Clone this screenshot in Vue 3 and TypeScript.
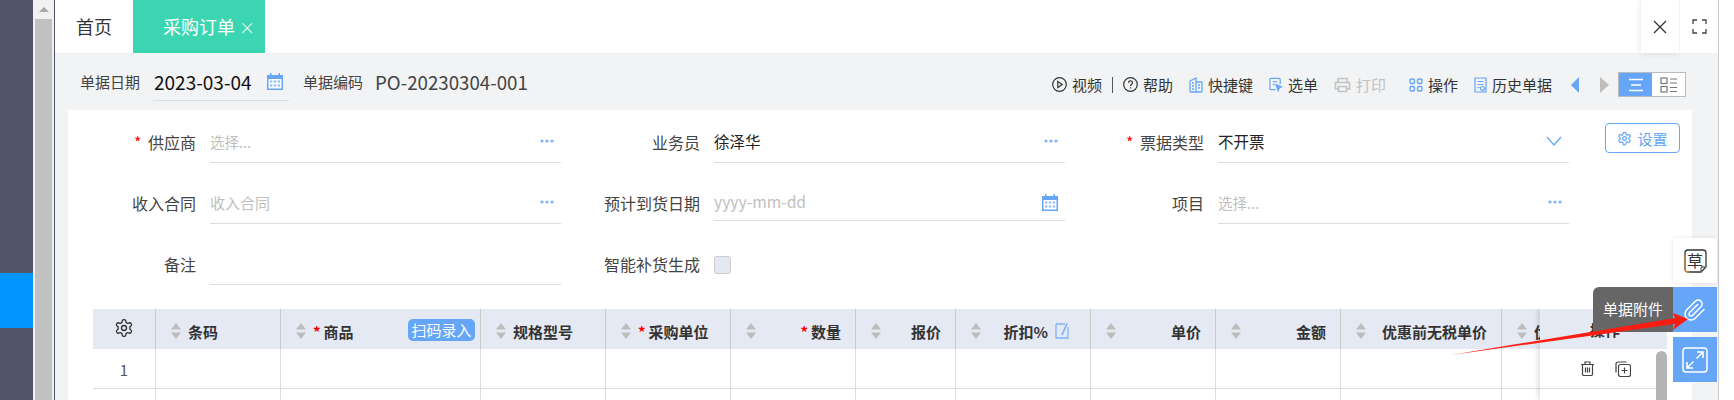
<script setup lang="ts">
interface Column {
  title: string
  width: number
  required?: boolean
  right?: boolean
  scan?: boolean
  edit?: boolean
}

const columns: Column[] = [
  { title: '条码', width: 125 },
  { title: '商品', width: 200, required: true, scan: true },
  { title: '规格型号', width: 125 },
  { title: '采购单位', width: 125, required: true },
  { title: '数量', width: 125, required: true, right: true },
  { title: '报价', width: 100, right: true },
  { title: '折扣%', width: 135, right: true, edit: true },
  { title: '单价', width: 125, right: true },
  { title: '金额', width: 125, right: true },
  { title: '优惠前无税单价', width: 161, right: true },
  { title: '优惠后单价', width: 125 }
]

const gear =
  'M12.22 2h-.44a2 2 0 0 0-2 2v.18a2 2 0 0 1-1 1.73l-.43.25a2 2 0 0 1-2 0l-.15-.08a2 2 0 0 0-2.73.73l-.22.38a2 2 0 0 0 .73 2.73l.15.1a2 2 0 0 1 1 1.72v.51a2 2 0 0 1-1 1.74l-.15.09a2 2 0 0 0-.73 2.73l.22.38a2 2 0 0 0 2.73.73l.15-.08a2 2 0 0 1 2 0l.43.25a2 2 0 0 1 1 1.73V20a2 2 0 0 0 2 2h.44a2 2 0 0 0 2-2v-.18a2 2 0 0 1 1-1.73l.43-.25a2 2 0 0 1 2 0l.15.08a2 2 0 0 0 2.73-.73l.22-.39a2 2 0 0 0-.73-2.73l-.15-.08a2 2 0 0 1-1-1.74v-.5a2 2 0 0 1 1-1.74l.15-.09a2 2 0 0 0 .73-2.73l-.22-.38a2 2 0 0 0-2.73-.73l-.15.08a2 2 0 0 1-2 0l-.43-.25a2 2 0 0 1-1-1.73V4a2 2 0 0 0-2-2z'
</script>

<template>
  <div class="page">
    <aside class="sidebar"><div class="side-active"></div></aside>
    <div class="page-scroll">
      <span class="scroll-up"></span>
      <div class="scroll-thumb"></div>
    </div>

    <div class="main">
      <header class="tabs">
        <div class="tab">首页</div>
        <div class="tab active">采购订单 <span class="tab-x">×</span></div>
        <div class="tab-tools">
          <button class="tool-btn shadowed">
            <svg width="14" height="14" viewBox="0 0 14 14"><path d="M1 1l12 12M13 1L1 13" stroke="#333" stroke-width="1.3" /></svg>
          </button>
          <button class="tool-btn">
            <svg width="15" height="15" viewBox="0 0 15 15" fill="none" stroke="#444" stroke-width="1.3">
              <path d="M1 5V1h4M10 1h4v4M14 10v4h-4M5 14H1v-4" />
            </svg>
          </button>
        </div>
      </header>

      <div class="toolbar">
        <span class="tb-label">单据日期</span>
        <div class="date-box">
          <span class="date-value">2023-03-04</span>
          <svg class="calendar" width="18" height="18" viewBox="0 0 18 18">
            <path d="M1 3h3V1h1.5v2h7V1H14v2h3v15H1z" fill="#66a6f8" />
            <path d="M2.5 7h13v9.5h-13z" fill="#fff" />
            <path d="M4 8.5h2.4v2H4zM7.8 8.5h2.4v2H7.8zM11.6 8.5H14v2h-2.4zM4 12.5h2.4v2H4zM7.8 12.5h2.4v2H7.8zM11.6 12.5H14v2h-2.4z" fill="#8dbcf9" />
          </svg>
        </div>
        <span class="tb-label code-label">单据编码</span>
        <span class="code-value">PO-20230304-001</span>

        <div class="actions">
          <span class="act">
            <svg width="15" height="15" viewBox="0 0 15 15" fill="none" stroke="#333" stroke-width="1.2">
              <circle cx="7.5" cy="7.5" r="6.8" /><path d="M5.8 4.5l4.4 3-4.4 3z" />
            </svg>
            视频
          </span>
          <span class="act-bar"></span>
          <span class="act">
            <svg width="15" height="15" viewBox="0 0 15 15" fill="none" stroke="#333" stroke-width="1.2">
              <circle cx="7.5" cy="7.5" r="6.8" /><path d="M5.5 5.8a2 2 0 1 1 3 1.7c-.7.4-1 .8-1 1.5M7.5 10.3v1.2" />
            </svg>
            帮助
          </span>
          <span class="act">
            <svg width="14" height="16" viewBox="0 0 14 16" fill="none" stroke="#66a6f8" stroke-width="1.3">
              <path d="M1 4l6-3v14H2a1 1 0 0 1-1-1zM7 5h5a1 1 0 0 1 1 1v8a1 1 0 0 1-1 1H7" />
              <path d="M3 6h2M3 9h2M3 12h2M9 8h2M9 11h2" />
            </svg>
            快捷键
          </span>
          <span class="act">
            <svg width="14" height="16" viewBox="0 0 15 16" fill="none" stroke="#66a6f8" stroke-width="1.3">
              <path d="M7 13H2a1 1 0 0 1-1-1V2a1 1 0 0 1 1-1h9a1 1 0 0 1 1 1v5M4 4.5h5M4 7.5h2" />
              <path d="M7.5 7.5l6 2.5-2.5 1.2-1.2 3z" fill="#66a6f8" />
            </svg>
            选单
          </span>
          <span class="act disabled">
            <svg width="17" height="16" viewBox="0 0 17 16" fill="none" stroke="#c2c2c2" stroke-width="1.6">
              <path d="M4 5V1.5h9V5M4 12H1.5V5.5h14V12H13" /><path d="M4.5 9.5h8v5h-8z" />
            </svg>
            打印
          </span>
          <span class="act op">
            <svg width="14" height="14" viewBox="0 0 14 14" fill="none" stroke="#66a6f8" stroke-width="1.4">
              <rect x="1" y="1" width="4.5" height="4.5" rx="1.5" /><rect x="8.5" y="1" width="4.5" height="4.5" rx="1.5" />
              <rect x="1" y="8.5" width="4.5" height="4.5" rx="1.5" /><rect x="8.5" y="8.5" width="4.5" height="4.5" rx="1.5" />
            </svg>
            操作
          </span>
          <span class="act">
            <svg width="13" height="16" viewBox="0 0 13 16" fill="none" stroke="#66a6f8" stroke-width="1.2">
              <path d="M1 1h11v14H1zM3.5 4.5h6M3.5 7.5h6M3.5 10.5h2" /><circle cx="8.5" cy="11.5" r="2" />
            </svg>
            历史单据
          </span>
          <span class="arrow left"></span>
          <span class="arrow right"></span>
          <div class="view-toggle">
            <span class="view on">
              <svg width="16" height="14" viewBox="0 0 16 14" stroke="#fff" stroke-width="1.4"><path d="M1 1.5h14M3 7h10M1 12.5h14" /></svg>
            </span>
            <span class="view">
              <svg width="18" height="16" viewBox="0 0 18 16" fill="none" stroke="#777" stroke-width="1.2">
                <rect x="1" y="1" width="6" height="5.5" /><rect x="1" y="9.5" width="6" height="5.5" />
                <path d="M10 2h7M10 6h7M10 10.5h7M10 14.5h7" />
              </svg>
            </span>
          </div>
        </div>
      </div>

      <section class="panel">
        <button class="setting-btn">
          <svg width="15" height="15" viewBox="0 0 24 24" fill="none" stroke="#66a6f8" stroke-width="2"><path :d="gear" /><circle cx="12" cy="12" r="3" /></svg>
          设置
        </button>

        <div class="form">
          <div class="item">
            <label class="label"><i class="star">*</i> 供应商</label>
            <div class="field">
              <span class="ph small">选择...</span>
              <svg class="dots" width="14" height="4" viewBox="0 0 14 4" fill="#7fb2f8"><circle cx="2" cy="2" r="1.6" /><circle cx="7" cy="2" r="1.6" /><circle cx="12" cy="2" r="1.6" /></svg>
            </div>
          </div>
          <div class="item">
            <label class="label">业务员</label>
            <div class="field">
              <span class="val">徐泽华</span>
              <svg class="dots" width="14" height="4" viewBox="0 0 14 4" fill="#7fb2f8"><circle cx="2" cy="2" r="1.6" /><circle cx="7" cy="2" r="1.6" /><circle cx="12" cy="2" r="1.6" /></svg>
            </div>
          </div>
          <div class="item">
            <label class="label"><i class="star">*</i> 票据类型</label>
            <div class="field">
              <span class="val">不开票</span>
              <svg class="chevron" width="16" height="10" viewBox="0 0 16 10" fill="none" stroke="#66a6f8" stroke-width="1.2"><path d="M1 1l7 8 7-8" /></svg>
            </div>
          </div>

          <div class="item">
            <label class="label">收入合同</label>
            <div class="field">
              <span class="ph">收入合同</span>
              <svg class="dots" width="14" height="4" viewBox="0 0 14 4" fill="#7fb2f8"><circle cx="2" cy="2" r="1.6" /><circle cx="7" cy="2" r="1.6" /><circle cx="12" cy="2" r="1.6" /></svg>
            </div>
          </div>
          <div class="item">
            <label class="label">预计到货日期</label>
            <div class="field date-field">
              <span class="ph">yyyy-mm-dd</span>
              <svg class="calendar" width="18" height="18" viewBox="0 0 18 18">
                <path d="M1 3h3V1h1.5v2h7V1H14v2h3v15H1z" fill="#66a6f8" />
                <path d="M2.5 7h13v9.5h-13z" fill="#fff" />
                <path d="M4 8.5h2.4v2H4zM7.8 8.5h2.4v2H7.8zM11.6 8.5H14v2h-2.4zM4 12.5h2.4v2H4zM7.8 12.5h2.4v2H7.8zM11.6 12.5H14v2h-2.4z" fill="#8dbcf9" />
              </svg>
            </div>
          </div>
          <div class="item">
            <label class="label">项目</label>
            <div class="field">
              <span class="ph small">选择...</span>
              <svg class="dots" width="14" height="4" viewBox="0 0 14 4" fill="#7fb2f8"><circle cx="2" cy="2" r="1.6" /><circle cx="7" cy="2" r="1.6" /><circle cx="12" cy="2" r="1.6" /></svg>
            </div>
          </div>

          <div class="item">
            <label class="label">备注</label>
            <div class="field"></div>
          </div>
          <div class="item">
            <label class="label">智能补货生成</label>
            <span class="checkbox"></span>
          </div>
        </div>

        <div class="grid">
          <div class="grid-head">
            <div class="cell-gear">
              <svg width="20" height="20" viewBox="0 0 24 24" fill="none" stroke="#333" stroke-width="1.6"><path :d="gear" /><circle cx="12" cy="12" r="3" /></svg>
            </div>
            <div v-for="col in columns" :key="col.title" class="hcell" :style="{ width: col.width + 'px' }">
              <svg class="sort" width="10" height="16" viewBox="0 0 10 16" fill="#bdbdbd"><path d="M5 0l5 6.5H0zM5 16L0 9.5h10z" /></svg>
              <span class="hcell-title" :class="{ 'to-right': col.right }">
                <i v-if="col.required" class="hstar">*</i>{{ col.title }}
              </span>
              <svg v-if="col.edit" class="edit" width="14" height="16" viewBox="0 0 14 16" fill="none" stroke="#7fb2f8" stroke-width="1.3">
                <path d="M1 1h9M1 1v14h12V4" /><path d="M12 .5L7 12" stroke-width="1.8" />
              </svg>
              <span v-if="col.scan" class="scan">扫码录入</span>
            </div>
          </div>
          <div v-for="n in 2" :key="n" class="grid-row">
            <div class="cell-no">{{ n === 1 ? n : '' }}</div>
            <div v-for="col in columns" :key="col.title" class="bcell" :style="{ width: col.width + 'px' }"></div>
          </div>

          <div class="fixed-col">
            <div class="fixed-head">操作</div>
            <div class="fixed-row">
              <svg width="13" height="15" viewBox="0 0 13 15" fill="none" stroke="#444" stroke-width="1.2">
                <path d="M0 3.5h13M4 3.5V1h5v2.5M1.5 3.5V13A1.5 1.5 0 0 0 3 14.5h7a1.5 1.5 0 0 0 1.5-1.5V3.5M4.5 6.5v5M6.5 6.5v5M8.5 6.5v5" />
              </svg>
              <svg width="16" height="16" viewBox="0 0 16 16" fill="none" stroke="#444" stroke-width="1.2">
                <path d="M1 11.5V3a2 2 0 0 1 2-2h8.5" />
                <rect x="3.5" y="3.5" width="12" height="12" rx="2" /><path d="M9.5 6.5v6M6.5 9.5h6" />
              </svg>
            </div>
          </div>
          <div class="grid-scroll"></div>
        </div>
      </section>
    </div>

    <div class="floats">
      <div class="float-btn plain">
        <span class="draft">
          <svg class="draft-frame" width="23" height="24" viewBox="0 0 23 24" fill="none" stroke-width="1.3">
            <path d="M1 6V4a3 3 0 0 1 3-3h15a3 3 0 0 1 3 3v14l-5 5H4a3 3 0 0 1-3-3z" stroke="#333" />
            <path d="M1 5v15a3 3 0 0 0 3 3h2" stroke="#c4853f" />
            <path d="M22 18h-4a1 1 0 0 0-1 1v4" stroke="#666" />
          </svg>
          草
        </span>
      </div>
      <div class="float-btn">
        <span class="float-tip">单据附件</span>
        <svg width="24" height="24" viewBox="0 0 24 24" fill="none" stroke="#fff" stroke-width="1.5"><path d="m21.44 11.05-9.19 9.19a6 6 0 0 1-8.49-8.49l8.57-8.57A4 4 0 1 1 18 8.84l-8.59 8.57a2 2 0 0 1-2.83-2.83l8.49-8.48" /></svg>
      </div>
      <div class="float-btn">
        <svg width="26" height="26" viewBox="0 0 26 26" fill="none" stroke="#fff" stroke-width="1.5">
          <rect x="1" y="1" width="24" height="24" rx="3" />
          <path d="M15 5h6v6M21 5l-6.5 6.5M11 21H5v-6M5 21l6.5-6.5" />
        </svg>
      </div>
    </div>

    <svg class="red-arrow" width="1734" height="400" viewBox="0 0 1734 400">
      <path d="M1451 355L1675 318 1673 313 1688 319 1673 330 1675 324z" fill="#fb1d12" />
    </svg>
  </div>
</template>

<style scoped>
.page {
  position: relative;
  display: flex;
  width: 1734px;
  height: 400px;
  overflow: hidden;
  background: #fff;
  font-family: "Noto Sans CJK SC", "Liberation Sans", sans-serif;
  color: #333;
}

.sidebar {
  width: 33px;
  flex: none;
  background: #4f5468;
  padding-top: 273px;
  box-sizing: border-box;
}

.side-active {
  height: 55px;
  background: #0095ff;
}

.page-scroll {
  flex: none;
  width: 22px;
  box-sizing: border-box;
  padding: 7px 2px 0;
  background: #f1f1f1;
  border-right: 1px solid #4f5468;
}

.scroll-up {
  display: block;
  width: 0;
  margin: 0 auto 7px;
  border: 5px solid transparent;
  border-top: 0;
  border-bottom-color: #a8a8a8;
}

.scroll-thumb {
  height: 400px;
  background: #c1c1c1;
}

.main {
  flex: none;
  width: 1663px;
  height: 400px;
  display: flex;
  flex-direction: column;
  background: #f1f3f5;
  border-right: 1px solid #ccc;
}

.tabs {
  flex: none;
  height: 53px;
  display: flex;
  background: #fff;
}

.tab {
  width: 78px;
  line-height: 53px;
  padding-left: 21px;
  box-sizing: border-box;
  font-size: 18px;
  color: #333;
}

.tab.active {
  width: 132px;
  padding-left: 30px;
  background: #3bd6b1;
  color: #fff;
}

.tab-x {
  font-size: 16px;
  font-weight: 300;
}

.tab-tools {
  margin-left: auto;
  display: flex;
}

.tool-btn {
  width: 38px;
  height: 53px;
  padding: 0;
  border: 0;
  background: #fff;
  display: flex;
  align-items: center;
  justify-content: center;
}

.shadowed {
  box-shadow: 0 0 6px rgb(0 0 0 / 0.12);
  margin-right: 1px;
}

.toolbar {
  flex: none;
  height: 57px;
  display: flex;
  align-items: center;
  padding: 0 32px 0 25px;
}

.tb-label {
  font-size: 15px;
  color: #444;
}

.date-box {
  width: 136px;
  height: 37px;
  margin: 2px 0 0 13px;
  box-sizing: border-box;
  display: flex;
  align-items: center;
  border-bottom: 1px solid #dcdcdc;
}

.date-value {
  font-size: 19px;
  color: #111;
  width: 112px;
  margin: -2px 0 0 1px;
}

.date-box .calendar {
  margin-top: -2px;
}

.code-label {
  margin-left: 14px;
}

.code-value {
  margin-left: 12px;
  font-size: 18.7px;
  color: #444;
}

.actions {
  margin-left: auto;
  display: flex;
  align-items: center;
  gap: 16px;
  font-size: 15px;
  padding-top: 6px;
}

.act {
  display: flex;
  align-items: center;
  gap: 5px;
  color: #333;
}

.act.disabled {
  color: #c2c2c2;
}

.act.op {
  margin-left: 7px;
}

.act-bar {
  width: 1px;
  height: 16px;
  margin: 0 -6px;
  background: #555;
}

.arrow {
  width: 0;
  border: 8px solid transparent;
}

.arrow.left {
  margin-left: 3px;
  border-left: 0;
  border-right: 8px solid #66a6f8;
}

.arrow.right {
  margin-left: 5px;
  margin-right: -7px;
  border-right: 0;
  border-left: 9px solid #c2bdb8;
}

.view-toggle {
  display: flex;
  width: 68px;
  height: 25px;
  box-sizing: border-box;
  border: 1px solid #bbb;
  background: #fff;
}

.view {
  flex: 1;
  display: flex;
  align-items: center;
  justify-content: center;
}

.view.on {
  background: #66a6f8;
}

.panel {
  position: relative;
  flex: 1;
  margin: 0 26px 0 13px;
  padding: 13px 25px 0;
  background: #fff;
  min-height: 0;
}

.setting-btn {
  position: absolute;
  top: 13px;
  right: 12px;
  width: 75px;
  height: 30px;
  padding: 0;
  display: flex;
  align-items: center;
  justify-content: center;
  gap: 5px;
  background: #fff;
  border: 1px solid #66a6f8;
  border-radius: 4px;
  color: #66a6f8;
  font: 15px "Noto Sans CJK SC", sans-serif;
}

.form {
  margin-left: -25px;
  display: grid;
  grid-template-columns: repeat(3, 504px);
  grid-auto-rows: 40px;
  row-gap: 21px;
}

.item {
  display: flex;
  align-items: flex-start;
}

.label {
  width: 128px;
  flex: none;
  margin-right: 14px;
  text-align: right;
  font-size: 16px;
  line-height: 38px;
  color: #444;
}

.star {
  color: #f00;
  font-style: normal;
  margin-right: 3px;
}

.field {
  width: 351px;
  height: 40px;
  box-sizing: border-box;
  display: flex;
  align-items: center;
  justify-content: space-between;
  padding: 0 7px 3px 0;
  border-bottom: 1px solid #ddd;
  font-size: 15px;
}

.date-field {
  height: 37px;
  padding: 0 6px 1px 0;
}

.date-field .ph {
  font-size: 15.7px;
}

.val {
  font-size: 15.5px;
  color: #222;
}

.ph {
  color: #bfbfbf;
}

.ph.small {
  font-size: 14.5px;
}

.dots {
  flex: none;
}

.checkbox {
  width: 17px;
  height: 18px;
  margin-top: 11px;
  box-sizing: border-box;
  background: #e4e8f3;
  border: 1px solid #ccc;
  border-radius: 3px;
}

.grid {
  position: relative;
  margin-top: 24px;
  width: 1574px;
  height: 91px;
  overflow: hidden;
}

.grid-head {
  display: flex;
  height: 40px;
  background: #e5e9f4;
}

.cell-gear {
  width: 62px;
  flex: none;
  padding-top: 9px;
  text-align: center;
  border-right: 1px solid #ccc;
}

.hcell {
  flex: none;
  position: relative;
  box-sizing: border-box;
  height: 40px;
  padding: 4px 14px 0 15px;
  display: flex;
  align-items: center;
  gap: 7px;
  border-right: 1px solid #ccc;
  font-size: 15px;
  font-weight: 700;
  color: #333;
  white-space: nowrap;
}

.sort {
  flex: none;
}

.hcell-title.to-right {
  margin-left: auto;
}

.hstar {
  color: #f00;
  font-style: normal;
  margin-right: 3px;
}

.edit {
  flex: none;
  margin-right: 7px;
}

.scan {
  position: absolute;
  top: 10px;
  right: 5px;
  width: 67px;
  height: 22px;
  border-radius: 5px;
  background: #66a6f8;
  color: #fff;
  font-size: 15px;
  font-weight: 400;
  line-height: 21px;
  text-align: center;
}

.grid-row {
  display: flex;
  height: 39px;
  border-bottom: 1px solid #ddd;
}

.cell-no {
  width: 62px;
  flex: none;
  border-left: 1px solid #ddd;
  border-right: 1px solid #ddd;
  margin-left: -1px;
  text-align: center;
  font-size: 15px;
  line-height: 42px;
  color: #555;
}

.bcell {
  flex: none;
  box-sizing: border-box;
  border-right: 1px solid #ddd;
}

.fixed-col {
  position: absolute;
  top: 0;
  right: 0;
  width: 127px;
  height: 100%;
  background: #fff;
  box-shadow: -3px 0 4px rgb(0 0 0 / 0.1);
}

.fixed-head {
  height: 40px;
  padding: 10px 0 0 50px;
  box-sizing: border-box;
  background: #e5e9f4;
  font-size: 15px;
  font-weight: 700;
}

.fixed-row {
  height: 39px;
  display: flex;
  align-items: center;
  gap: 21px;
  padding-left: 41px;
  border-bottom: 1px solid #ddd;
}

.grid-scroll {
  position: absolute;
  top: 42px;
  right: 0;
  width: 11px;
  height: 60px;
  border-radius: 6px 6px 0 0;
  background: #b4b4b4;
}

.floats {
  position: absolute;
  top: 238px;
  right: 17px;
  width: 44px;
  display: flex;
  flex-direction: column;
  gap: 4px;
}

.float-btn {
  position: relative;
  height: 45px;
  display: flex;
  align-items: center;
  justify-content: center;
  background: #66a6f8;
}

.float-btn + .float-btn + .float-btn {
  margin-top: 1px;
}

.float-btn.plain {
  background: #fff;
  box-shadow: 0 0 4px rgb(0 0 0 / 0.1);
}

.draft {
  position: relative;
  width: 23px;
  height: 24px;
  text-align: center;
  font-size: 16px;
  line-height: 23px;
  color: #333;
}

.draft-frame {
  position: absolute;
  top: 0;
  left: 0;
}

.float-tip {
  position: absolute;
  top: 0;
  right: 44px;
  width: 80px;
  height: 45px;
  border-radius: 6px 0 0 0;
  background: #666;
  color: #fff;
  font-size: 15px;
  line-height: 44px;
  text-align: center;
  white-space: nowrap;
}

.red-arrow {
  position: absolute;
  top: 0;
  left: 0;
  pointer-events: none;
}
</style>
